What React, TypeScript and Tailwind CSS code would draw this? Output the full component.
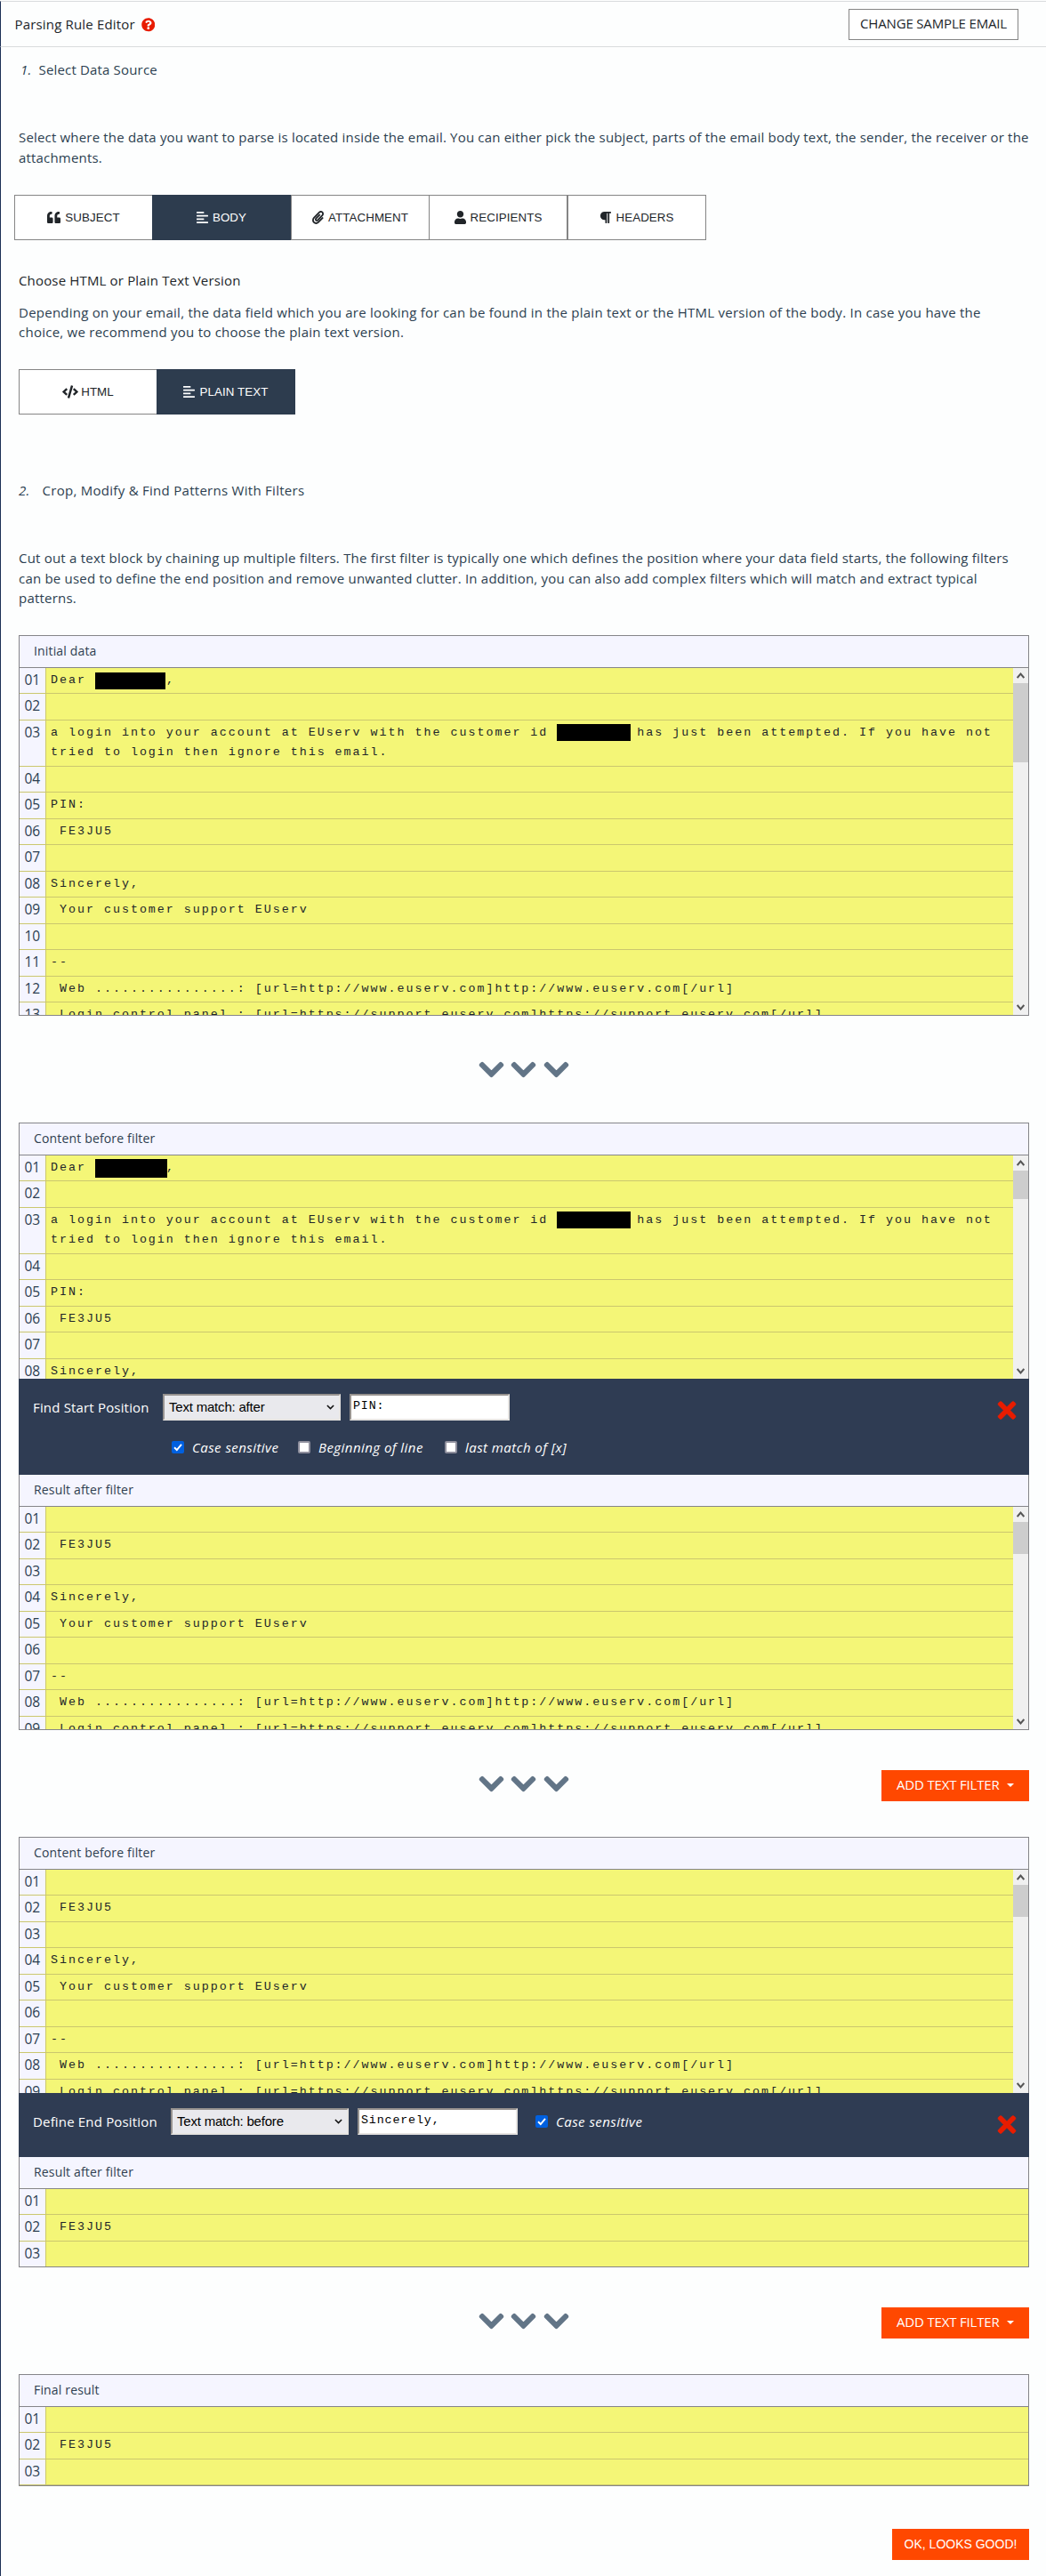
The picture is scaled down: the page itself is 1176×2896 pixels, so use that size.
import type { ReactNode } from "react";
import {
  FaAlignLeft,
  FaChevronDown,
  FaCode,
  FaPaperclip,
  FaParagraph,
  FaQuestionCircle,
  FaQuoteLeft,
  FaTimes,
  FaUser,
} from "react-icons/fa";

type Line = { text: ReactNode; lines?: number };

const Redacted = ({ className }: { className: string }) => (
  <span className={`inline-block bg-black ${className}`} />
);

const loginText = (
  <>
    a login into your account at EUserv with the customer id{" "}
    <Redacted className="mr-[-3px] -mt-1 mb-[-6px] h-[19px] w-[83px]" /> has just been attempted. If you have not
    <br />
    tried to login then ignore this email.
  </>
);

const signature: Line[] = [
  { text: "" },
  { text: "Sincerely," },
  { text: " Your customer support EUserv" },
  { text: "" },
  { text: "--" },
  { text: " Web ................: [url=http://www.euserv.com]http://www.euserv.com[/url]" },
  { text: " Login control panel : [url=https://support.euserv.com]https://support.euserv.com[/url]" },
];

const afterPin: Line[] = [{ text: "" }, { text: " FE3JU5" }, ...signature];

const emailBody = (dear: ReactNode): Line[] => [
  { text: dear },
  { text: "" },
  { text: loginText, lines: 2 },
  { text: "" },
  { text: "PIN:" },
  { text: " FE3JU5" },
  ...signature,
];

const initialData = emailBody(
  <>
    Dear <Redacted className="mr-[1px] -mt-1 mb-[-7px] h-[19px] w-[79px]" />,
  </>,
);
const beforeStart = emailBody(
  <>
    Dear <Redacted className="mr-[-1px] -mt-1 mb-[-8px] h-[21px] w-[81px]" />,
  </>,
).slice(0, 8);
const result: Line[] = [{ text: "" }, { text: " FE3JU5" }, { text: "" }];

function Arrow({ up }: { up?: boolean }) {
  return (
    <svg viewBox="0 0 9 7" className={up ? "h-[7px] w-[9px]" : "h-[7px] w-[9px] rotate-180"}>
      <path d="M0.7 6 L4.5 1.6 L8.3 6" fill="none" stroke="#555" strokeWidth="2" />
    </svg>
  );
}

function Scrollbar({ thumb }: { thumb: string }) {
  return (
    <div className="flex w-[17px] shrink-0 flex-col bg-[#f0f0f0]">
      <div className="flex h-[17px] items-center justify-center">
        <Arrow up />
      </div>
      <div className={`bg-[#cdcdcd] ${thumb}`} />
      <div className="mt-auto flex h-[17px] items-center justify-center">
        <Arrow />
      </div>
    </div>
  );
}

function PanelTitle({ children }: { children: string }) {
  return (
    <div className="flex h-9 items-center border-b border-[#858589] bg-[#f5f5ff] pb-px pl-4 text-[14px] tracking-[0.16px] text-[#2f4050]">
      {children}
    </div>
  );
}

function Lines({ rows, height, thumb }: { rows: Line[]; height: string; thumb?: string }) {
  return (
    <div className={`flex overflow-hidden ${height}`}>
      <div className="min-w-0 flex-1">
        {rows.map((row, i) => (
          <div
            key={i}
            className={`flex border-b border-[#cbc76e] ${i === 0 ? "h-[29px]" : row.lines === 2 ? "h-[52px]" : "h-[29.5px]"}`}
          >
            <div className="w-[30px] shrink-0 border-r border-[#cbc76e] bg-[#f5f5ff] pl-[5.5px] pt-[2px] text-[15.5px] leading-[22.5px]">
              {String(i + 1).padStart(2, "0")}
            </div>
            <div className="flex-1 whitespace-pre bg-[#f4f677] pl-[5px] pt-[3.3px] font-['Liberation_Mono','Courier_New',monospace] text-[13.33px] leading-[22.5px] tracking-[1.99px] text-[#212529]">
              {row.text}
            </div>
          </div>
        ))}
      </div>
      {thumb && <Scrollbar thumb={thumb} />}
    </div>
  );
}

function Panel({ children }: { children: ReactNode }) {
  return <section className="w-[1136px] border border-[#858589]">{children}</section>;
}

const Chevron = () => (
  <FaChevronDown className="h-[31px] w-[27px] overflow-visible" stroke="currentColor" strokeWidth={22} />
);

function Divider({ button }: { button?: boolean }) {
  return (
    <div className="grid h-[120px] w-[1136px] grid-cols-3 items-start pt-[44px]">
      <div />
      <div className="flex justify-center gap-[9.8px] pt-[0.5px] text-[#627587]">
        <Chevron />
        <Chevron />
        <Chevron />
      </div>
      {button && (
        <button className="mt-px flex h-[35px] w-[166px] items-center justify-self-end bg-[#ff4800] pb-[2px] pl-[17px] text-[15px] tracking-[-0.18px] text-white">
          ADD TEXT FILTER
          <span className="ml-[9px] border-x-4 border-t-4 border-x-transparent border-t-white" />
        </button>
      )}
    </div>
  );
}

function Tab({ icon, label, className }: { icon: ReactNode; label: string; className: string }) {
  return (
    <button
      className={`flex h-[51px] items-center justify-center gap-[5px] font-['Liberation_Sans',Arial,sans-serif] text-[13.33px] tracking-[0.1px] ${className}`}
    >
      {icon}
      <span className="pt-[2px]">{label}</span>
    </button>
  );
}

function Check({ label, checked, className }: { label: string; checked?: boolean; className: string }) {
  return (
    <label className={`flex items-center text-[15px] italic leading-[22px] tracking-[0.45px] ${className}`}>
      {checked ? (
        <span className="flex size-[14px] items-center justify-center rounded-[2px] bg-[#0060df]">
          <svg viewBox="0 0 12 12" className="size-3">
            <path d="M2 6.3 L4.8 9 L10 2.8" fill="none" stroke="#fff" strokeWidth="1.9" />
          </svg>
        </span>
      ) : (
        <span className="size-[14px] rounded-[2px] border-2 border-[#8f8f9d] bg-white" />
      )}
      <span className="ml-[9px]">{label}</span>
    </label>
  );
}

const fieldBorder = "border-2 border-t-[#96928f] border-l-[#96928f] border-r-[#e6e4e1] border-b-[#e6e4e1]";

function FilterFields({ label, option, value, gap }: { label: string; option: string; value: string; gap: string }) {
  return (
    <>
      <span className={`text-[15px] tracking-[0.17px] ${gap}`}>{label}</span>
      <div
        className={`flex h-[30px] w-[200px] items-center justify-between bg-[#e9e9ed] pl-[5px] pr-[5px] font-['Liberation_Sans',Arial,sans-serif] text-[15px] tracking-[-0.2px] text-black ${fieldBorder}`}
      >
        {option}
        <svg viewBox="0 0 10 6" className="h-[6px] w-[9px]">
          <path d="M1 0.8 L5 4.8 L9 0.8" fill="none" stroke="#111" strokeWidth="1.7" />
        </svg>
      </div>
      <div
        className={`ml-[10px] h-[30px] w-[180px] bg-white pl-[2px] font-['Liberation_Mono','Courier_New',monospace] text-[13.33px] leading-[24px] tracking-[0.85px] text-black ${fieldBorder}`}
      >
        {value}
      </div>
    </>
  );
}

const RemoveIcon = () => (
  <FaTimes
    className="ml-auto mr-[15px] mt-[7px] h-[29px] w-5 shrink-0 overflow-visible text-[#e81c00]"
    stroke="currentColor"
    strokeWidth={10}
  />
);

export default function App() {
  return (
    <div className="flex h-[2896px] w-[1176px] flex-col overflow-hidden bg-[#fdfefe] pt-px font-['Open_Sans','Noto_Sans',sans-serif] text-[15px] leading-[22.5px] text-[#2c3e50]">
      <header className="flex h-[52px] shrink-0 items-start border-y border-l border-y-[#d9dbdd] border-l-[#1c2f55]">
        <h1 className="ml-[15.5px] mt-[14px] tracking-[0.17px] text-[#212529]">Parsing Rule Editor</h1>
        <FaQuestionCircle className="ml-[7px] mt-[18px] size-[15.5px] text-[#e81c00]" />
        <button className="ml-auto mr-[31px] mt-[8px] h-[35px] w-[191px] border border-[#858585] bg-white pb-[3px] text-[15px] tracking-[-0.16px] text-[#212529]">
          CHANGE SAMPLE EMAIL
        </button>
      </header>

      <main className="flex-1 border-l border-[#1c2f55] pl-5">
        <h2 className="mt-[14px] tracking-[0.17px]">
          <i className="ml-[2px] inline-block w-[20.5px]">1.</i>
          Select Data Source
        </h2>
        <p className="mt-[53.5px] whitespace-nowrap pb-[0.5px] tracking-[0.18px]">
          Select where the data you want to parse is located inside the email. You can either pick the subject, parts of
          the email body text, the sender, the receiver or the
          <br />
          attachments.
        </p>

        <div className="-ml-[5px] mt-[30.5px] flex text-[#212529]">
          <Tab
            label="SUBJECT"
            className="w-[155px] border-y border-l border-[#858585] bg-white"
            icon={<FaQuoteLeft className="size-[15px]" />}
          />
          <Tab
            label="BODY"
            className="w-[156px] bg-[#2d3c4e] text-white"
            icon={<FaAlignLeft className="h-[15px] w-[13px]" />}
          />
          <Tab
            label="ATTACHMENT"
            className="w-[156px] border border-[#858585] bg-white"
            icon={<FaPaperclip className="h-[15px] w-[13px]" />}
          />
          <Tab
            label="RECIPIENTS"
            className="w-[155px] border-y border-r border-[#858585] bg-white"
            icon={<FaUser className="h-[15px] w-[13px]" />}
          />
          <Tab
            label="HEADERS"
            className="w-[156px] border border-[#858585] bg-white"
            icon={<FaParagraph className="h-[15px] w-[13px]" />}
          />
        </div>

        <h3 className="mt-[34px] tracking-[0.16px] text-[#212529]">Choose HTML or Plain Text Version</h3>
        <p className="mt-[13px] whitespace-nowrap pb-[0.5px] tracking-[0.25px]">
          Depending on your email, the data field which you are looking for can be found in the plain text or the HTML
          version of the body. In case you have the
          <br />
          choice, we recommend you to choose the plain text version.
        </p>

        <div className="mt-[30px] flex text-[#212529]">
          <Tab
            label="HTML"
            className="w-[155px] border-y border-l border-[#858585] bg-white !gap-[3px]"
            icon={<FaCode className="h-[15px] w-[18px]" />}
          />
          <Tab
            label="PLAIN TEXT"
            className="w-[156px] bg-[#2d3c4e] text-white"
            icon={<FaAlignLeft className="h-[15px] w-[13px]" />}
          />
        </div>

        <h2 className="mt-[74px] tracking-[0.28px]">
          <i className="inline-block w-[26.5px]">2.</i>
          Crop, Modify &amp; Find Patterns With Filters
        </h2>
        <p className="mb-[30.5px] mt-[53.5px] whitespace-nowrap tracking-[0.21px]">
          Cut out a text block by chaining up multiple filters. The first filter is typically one which defines the
          position where your data field starts, the following filters
          <br />
          can be used to define the end position and remove unwanted clutter. In addition, you can also add complex
          filters which will match and extract typical
          <br />
          patterns.
        </p>

        <Panel>
          <PanelTitle>Initial data</PanelTitle>
          <Lines rows={initialData} height="h-[390px]" thumb="h-[89px]" />
        </Panel>

        <Divider />

        <Panel>
          <PanelTitle>Content before filter</PanelTitle>
          <Lines rows={beforeStart} height="h-[251px]" thumb="h-[32px]" />
          <div className="mx-[-1px] h-[108px] bg-[#2f3c53] pl-4 pt-[17px] text-white">
            <div className="flex h-[30px] items-center">
              <FilterFields label="Find Start Position" option="Text match: after" value="PIN:" gap="w-[146px]" />
              <RemoveIcon />
            </div>
            <div className="ml-[156px] mt-[19px] flex">
              <Check label="Case sensitive" checked className="w-[142px]" />
              <Check label="Beginning of line" className="w-[165px]" />
              <Check label="last match of [x]" className="" />
            </div>
          </div>
          <PanelTitle>Result after filter</PanelTitle>
          <Lines rows={afterPin} height="h-[250px]" thumb="h-[36px]" />
        </Panel>

        <Divider button />

        <Panel>
          <PanelTitle>Content before filter</PanelTitle>
          <Lines rows={afterPin} height="h-[251px]" thumb="h-[36px]" />
          <div className="mx-[-1px] h-[72px] bg-[#2f3c53] pl-4 pt-[17px] text-white">
            <div className="flex h-[30px] items-center">
              <FilterFields label="Define End Position" option="Text match: before" value="Sincerely," gap="w-[155px]" />
              <Check label="Case sensitive" checked className="ml-5" />
              <RemoveIcon />
            </div>
          </div>
          <PanelTitle>Result after filter</PanelTitle>
          <Lines rows={result} height="h-[87px]" />
        </Panel>

        <Divider button />

        <Panel>
          <PanelTitle>Final result</PanelTitle>
          <Lines rows={result} height="h-[88px]" />
        </Panel>

        <button className="ml-[982px] mt-[48px] block h-[35px] w-[154px] bg-[#ff4800] font-['Liberation_Sans',Arial,sans-serif] text-[14px] leading-[35px] text-white">
          OK, LOOKS GOOD!
        </button>
      </main>
    </div>
  );
}
